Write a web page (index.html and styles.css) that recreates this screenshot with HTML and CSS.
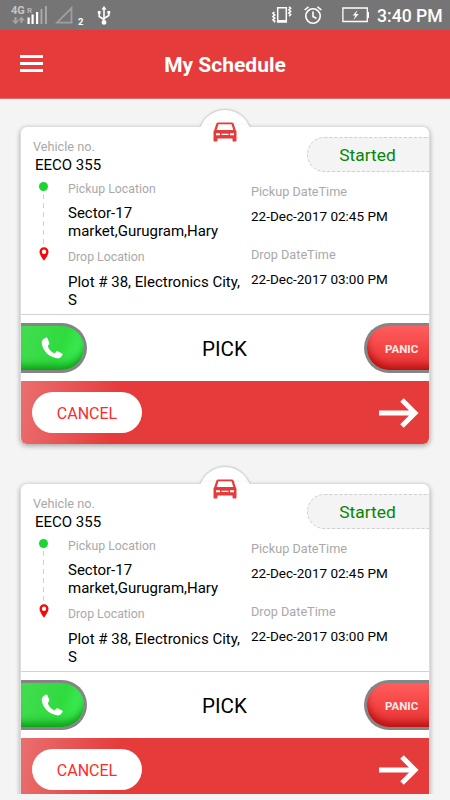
FILE: index.html
```
<!DOCTYPE html>
<html lang="en">
<head>
    <meta charset="UTF-8">
    <meta name="viewport" content="width=device-width, initial-scale=1.0">
    <title>My Schedule</title>
    <link rel="stylesheet" href="styles.css">
</head>
<body>
    <!-- Shared icons -->
    <svg class="icon-defs" width="0" height="0">
        <symbol id="car" viewBox="0 0 24 20">
            <path fill="#e63b3b" fill-rule="evenodd" d="M5.2 0.5h13.6q1.4 0 1.9 1.3L22.800 8.200Q23.500 9 23.500 10v8.500q0 1-1 1h-2q-1 0-1-1V16.500h-15v2q0 1-1 1h-2q-1 0-1-1V10q0-1 .7-1.800L3.300 1.800Q3.800.5 5.200.5zM5.500 2.200 3.700 8h16.600L18.500 2.200zM3 11.300v1.900h4v-1.900zM17 11.300v1.900h4v-1.900zM8.500 11.800v1.200h7v-1.200z"/>
        </symbol>
        <symbol id="pin" viewBox="0 0 10 14">
            <path fill="#f40808" fill-rule="evenodd" d="M5 .3A4.500 4.500 0 0 0 .5 4.800C.5 8.200 5 13.700 5 13.700S9.500 8.200 9.500 4.800A4.500 4.500 0 0 0 5 .3zM5 2.500a2.200 2.200 0 1 1 0 4.400 2.200 2.200 0 0 1 0-4.400z"/>
        </symbol>
        <symbol id="phone" viewBox="0 0 22 22">
            <path fill="#fff" d="M5.200.5C3 1.300.8 3 .7 5.200.9 13.500 8.500 20.600 17 21.400c2.300 0 3.700-1.700 4.600-3.600.2-.6 0-1-.5-1.300l-4.400-2.200c-.6-.3-1-.2-1.500.3l-1.500 1.800c-3.400-1-6.100-4-6.900-7.400l1.300-2c.3-.5.3-.9.100-1.400L6.300 1c-.2-.5-.6-.7-1.100-.5z"/>
        </symbol>
        <symbol id="arrow" viewBox="0 0 40 30">
            <path fill="none" stroke="#fff" stroke-width="5" d="M0 15h36M23 2l13 13-13 13"/>
        </symbol>
    </svg>

    <!-- Phone status bar -->
    <div class="status-bar">
        <div class="network">
            <span class="network-type">4G</span>
            <svg width="36" height="20" viewBox="0 0 36 20">
                <path stroke="#a5a5a5" stroke-width="2" fill="none" d="M3.500 12v5M9.500 18v-5"/>
                <path fill="#a5a5a5" d="M0 15.500h7l-3.500 4zM6 15.500h7l-3.500-4z"/>
                <path fill="#fff" d="M15.500 12.500h2.200V19h-2.200zM19.500 9.500h2.200V19h-2.200zM24 7h2.200v12H24z"/>
                <path fill="#aaa" d="M28.500 4h1.900v15h-1.900zM33 1h1.900v18H33z"/>
            </svg>
            <span class="roaming">R</span>
        </div>
        <svg class="no-signal" width="18" height="18" viewBox="0 0 18 18"><path fill="none" stroke="#9f9f9f" stroke-width="1.800" d="M2 16.700 16.500 2v14.700z"/></svg>
        <span class="sim">2</span>
        <svg class="usb" width="14" height="19" viewBox="0 0 14 19">
            <path fill="none" stroke="#fff" stroke-width="1.600" d="M7 16V3M7 13.500 2.200 10.500V6M7 12.500l4.800-3V6"/>
            <path fill="#fff" d="M7 0l2.500 3.500h-5zM.8 5h2.800v2.800H.8zM10.400 5h2.800v2.800h-2.800z"/>
            <circle cx="7" cy="16.400" r="2.400" fill="#fff"/>
        </svg>
        <svg class="vibrate" width="20" height="18" viewBox="0 0 20 18">
            <path fill="none" stroke="#fff" stroke-width="1.500" d="M5.700 1.800h8.600v13.900H5.700zM2.400 6 .8 7.300l2 1.600-2 1.600 2 1.600-2 1.600 2 1.600-1 1M17 .8l1.700 1.400-1.900 1.600 1.900 1.600-1.900 1.600 1.900 1.600-1.600 1.700"/>
            <path fill="#fff" d="M5 14h10v2.500H5z"/>
        </svg>
        <svg class="alarm" width="18" height="18" viewBox="0 0 18 18">
            <circle cx="9" cy="10" r="7.200" fill="none" stroke="#fff" stroke-width="1.600"/>
            <path fill="none" stroke="#fff" stroke-width="1.600" d="M9 5.500v5l3.500 2M.6 4 4.500.8M17.400 4 13.500.8"/>
        </svg>
        <svg class="battery" width="28" height="16" viewBox="0 0 28 16">
            <path fill="none" stroke="#fff" stroke-width="1.300" d="M.9 1h24.400v13.500H.9z"/>
            <path fill="#fff" d="M25.500 5H27v6h-1.500zM15.500 3l-4.800 5.500h2.600L11.500 13l5.200-6h-2.800z"/>
        </svg>
        <span class="clock">3:40 PM</span>
    </div>

    <header class="toolbar">
        <div class="menu">
            <span></span>
            <span></span>
            <span></span>
        </div>
        <h1>My Schedule</h1>
    </header>

    <main class="schedule">
        <div class="card">
            <div class="car-tab"><svg width="24" height="20"><use href="#car"/></svg></div>
            <div class="card-body">
                <div class="details">
                    <div class="trip">
                        <p class="label">Vehicle no.</p>
                        <p class="vehicle">EECO 355</p>
                        <div class="route">
                            <div class="track">
                                <span class="dot"></span>
                                <span class="line"></span>
                                <svg width="10" height="14"><use href="#pin"/></svg>
                            </div>
                            <div class="stops">
                                <p class="label">Pickup Location</p>
                                <p class="address">Sector-17<br>market,Gurugram,Hary</p>
                                <p class="label">Drop Location</p>
                                <p class="address">Plot # 38, Electronics City,<br>S</p>
                            </div>
                        </div>
                    </div>
                    <div class="times">
                        <div class="status">Started</div>
                        <p class="label">Pickup DateTime</p>
                        <p class="date">22-Dec-2017 02:45 PM</p>
                        <p class="label drop">Drop DateTime</p>
                        <p class="date">22-Dec-2017 03:00 PM</p>
                    </div>
                </div>
                <div class="actions">
                    <div class="call"><svg width="22" height="22"><use href="#phone"/></svg></div>
                    <div class="pick">PICK</div>
                    <div class="panic">PANIC</div>
                </div>
                <div class="card-footer">
                    <div class="cancel">CANCEL</div>
                    <svg width="40" height="30"><use href="#arrow"/></svg>
                </div>
            </div>
        </div>

        <div class="card">
            <div class="car-tab"><svg width="24" height="20"><use href="#car"/></svg></div>
            <div class="card-body">
                <div class="details">
                    <div class="trip">
                        <p class="label">Vehicle no.</p>
                        <p class="vehicle">EECO 355</p>
                        <div class="route">
                            <div class="track">
                                <span class="dot"></span>
                                <span class="line"></span>
                                <svg width="10" height="14"><use href="#pin"/></svg>
                            </div>
                            <div class="stops">
                                <p class="label">Pickup Location</p>
                                <p class="address">Sector-17<br>market,Gurugram,Hary</p>
                                <p class="label">Drop Location</p>
                                <p class="address">Plot # 38, Electronics City,<br>S</p>
                            </div>
                        </div>
                    </div>
                    <div class="times">
                        <div class="status">Started</div>
                        <p class="label">Pickup DateTime</p>
                        <p class="date">22-Dec-2017 02:45 PM</p>
                        <p class="label drop">Drop DateTime</p>
                        <p class="date">22-Dec-2017 03:00 PM</p>
                    </div>
                </div>
                <div class="actions">
                    <div class="call"><svg width="22" height="22"><use href="#phone"/></svg></div>
                    <div class="pick">PICK</div>
                    <div class="panic">PANIC</div>
                </div>
                <div class="card-footer">
                    <div class="cancel">CANCEL</div>
                    <svg width="40" height="30"><use href="#arrow"/></svg>
                </div>
            </div>
        </div>
    </main>
</body>
</html>
```

FILE: styles.css
```
* {
    box-sizing: border-box;
}

body {
    font-family: Roboto, "Liberation Sans", sans-serif;
    margin: 0;
    width: 450px;
    height: 800px;
    display: flex;
    flex-direction: column;
    background-color: #f4f4f4;
    overflow: hidden;
}

p, h1 {
    margin: 0;
}

svg {
    display: block;
    flex: none;
}

.icon-defs {
    position: absolute;
}

/* Status bar */
.status-bar {
    height: 30px;
    flex: none;
    display: flex;
    align-items: flex-start;
    background-color: #757575;
    color: #fff;
}

.network {
    position: relative;
    width: 36px;
    margin: 5px 0 0 12px;
}

.network-type {
    position: absolute; /* sits over the signal bars */
    left: -1px;
    top: 0;
    font-size: 11px;
    font-weight: bold;
    line-height: 11px;
    color: #c6c6c6;
}

.roaming {
    position: absolute; /* roaming letter above the first bar */
    left: 15px;
    top: 2px;
    font-size: 8px;
    font-weight: bold;
    line-height: 7px;
    color: #b5b5b5;
}

.no-signal {
    margin: 6px 0 0 7px;
}

.sim {
    width: 20px;
    padding-left: 5px;
    margin-top: 16px;
    font-size: 9.5px;
    font-weight: bold;
    line-height: 12px;
}

.usb {
    margin: 6px 0 0 4px;
}

.vibrate {
    margin: 6px 0 0 161px;
}

.alarm {
    margin: 6px 0 0 12px;
}

.battery {
    margin: 7px 0 0 20px;
}

.clock {
    margin: 5px 0 0 7px;
    font-size: 17.6px;
    font-weight: 500;
    line-height: 22px;
    white-space: nowrap;
}

/* Toolbar */
.toolbar {
    height: 69px;
    flex: none;
    display: grid;
    grid-template-columns: 44px 1fr 44px;
    align-items: center;
    background-color: #e63b3b;
    border-bottom: 1px solid #ea6b6b;
    color: #fff;
}

.menu {
    display: flex;
    flex-direction: column;
    gap: 4px;
    margin-left: 20px;
    padding-bottom: 1px;
}

.menu span {
    width: 23px;
    height: 3px;
    background-color: #fff;
}

.toolbar h1 {
    font-size: 21px;
    font-weight: bold;
    line-height: 26px;
    text-align: center;
    padding-top: 2px;
}

/* Schedule list */
.schedule {
    height: 695px;
    flex: none;
    padding: 27px 20px 0;
    overflow: hidden;
}

.card {
    position: relative;
    margin-bottom: 39px;
}

.car-tab {
    position: absolute; /* round tab sticking out of the card top */
    top: -16px;
    left: 179px;
    width: 52px;
    height: 52px;
    border-radius: 50%;
    background-color: #fff;
    box-shadow: 0 0 2px 1px rgba(0, 0, 0, 0.18);
    display: flex;
    justify-content: center;
    padding-top: 12px;
}

.car-tab::after {
    content: "";
    position: absolute; /* opens the card's top edge under the tab */
    z-index: 1;
    top: 15px;
    left: 2px;
    width: 48px;
    height: 4px;
    background-color: #fff;
}

.car-tab svg {
    position: relative;
    z-index: 2;
}

.card-body {
    position: relative;
    z-index: 0;
    width: 410px;
    height: 318px;
    border: 1px solid #dcdcdc;
    border-bottom-width: 0;
    border-radius: 7px;
    background-color: #fff;
    box-shadow: 0 2px 5px rgba(0, 0, 0, 0.32);
}

.details {
    height: 188px;
    display: flex;
    border-bottom: 1px solid #d2d2d2;
}

.trip {
    width: 230px;
    padding: 11px 0 0 12px;
}

.label {
    font-size: 12.7px;
    line-height: 18px;
    color: #a9a9a9;
}

.vehicle {
    margin: -1px 0 0 2px;
    font-size: 15px;
    line-height: 20px;
    color: #000;
}

.route {
    display: flex;
    margin-top: 5px;
}

.track {
    width: 21px;
    display: flex;
    flex-direction: column;
    align-items: center;
    padding-top: 2px;
}

.dot {
    width: 9px;
    height: 9px;
    border-radius: 50%;
    background-color: #19d633;
}

.line {
    width: 1px;
    height: 52px;
    margin: 3px 0 1px;
    background: repeating-linear-gradient(#cfcfcf 0 5px, transparent 5px 9px);
}

.stops {
    padding-left: 14px;
    white-space: nowrap;
}

.stops .label {
    font-size: 12.3px;
}

.address {
    margin: 6px 0 8px;
    font-size: 15px;
    line-height: 18px;
    color: #000;
}

.stops .address:last-child {
    margin-top: 7px;
}

.times {
    flex: 1;
    padding-top: 10px;
}

.status {
    width: 122px;
    height: 35px;
    margin-left: 56px;
    padding-right: 2px;
    border: 1px dashed #d0d0d0;
    border-right: none;
    border-radius: 18px 0 0 18px;
    background-color: #f4f4f4;
    color: #078607;
    font-size: 17.4px;
    line-height: 34px;
    text-align: center;
}

.times .label {
    margin-top: 11px;
}

.times .drop {
    margin-top: 21px;
}

.date {
    margin-top: 6px;
    font-size: 13.5px;
    line-height: 18px;
    color: #000;
}

/* Call, pick and panic */
.actions {
    height: 66px;
    display: flex;
    align-items: center;
    justify-content: space-between;
}

.call {
    width: 66px;
    height: 50px;
    padding: 11px 0 0 20px;
    border: 3px solid #858585;
    border-left: none;
    border-radius: 0 25px 25px 0;
    background: linear-gradient(110deg, #44dc51, #2fdb3e 60%, #42f760);
    box-shadow: inset -2px -9px 9px -5px #0b9712;
}

.pick {
    font-size: 20.6px;
    line-height: 24px;
    padding: 1px 2px 0 0;
    color: #000;
}

.panic {
    width: 65px;
    height: 50px;
    padding-left: 18px;
    border: 3px solid #858585;
    border-right: none;
    border-radius: 25px 0 0 25px;
    background: linear-gradient(#ff5d5d, #f24141 60%, #e43636);
    box-shadow: inset 3px -9px 9px -5px #b50d0d;
    color: #ffe9e9;
    font-size: 11.5px;
    font-weight: bold;
    line-height: 46px;
}

.card-footer {
    height: 63px;
    display: flex;
    align-items: center;
    justify-content: space-between;
    padding: 0 10px 0 11px;
    border-radius: 0 0 6px 6px;
    background: linear-gradient(100deg, #ea6f6f, #e63b3b 24%);
}

.cancel {
    width: 110px;
    height: 41px;
    border-radius: 21px;
    background-color: #fff;
    color: #ff2a2a;
    font-size: 16px;
    line-height: 43px;
    text-align: center;
}
```
